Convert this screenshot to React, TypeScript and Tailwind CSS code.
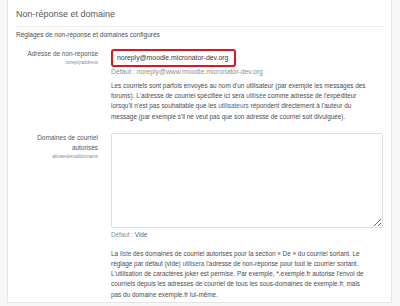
import React from 'react'

const font = { fontFamily: '"Liberation Sans", Arial, sans-serif' }

function Link({ children }: { children: React.ReactNode }) {
  return <span className="text-[#2f6ea5]">{children}</span>
}

function Row({ label, name, children }: { label: React.ReactNode; name: string; children: React.ReactNode }) {
  return (
    <div className="flex">
      <div className="w-[82px] shrink-0 text-right">
        <div className="text-[6.45px] leading-[10px] text-[#55585b]">{label}</div>
        <div className="text-[4.8px] leading-[7px] text-[#8a8f94]">{name}</div>
      </div>
      <div className="ml-[13px] flex-1">{children}</div>
    </div>
  )
}

export default function App() {
  return (
    <div className="w-[400px] h-[306px] overflow-hidden bg-[#f7f7f7] pl-[7px] pr-[8px]" style={font}>
      <div className="bg-white border-x border-b border-[#e5e5e5] px-[8px] h-[303px]">
        {/* En-tête de la section */}
        <h3 className="pt-[7px] text-[9px] leading-[14px] text-[#55585b] font-normal">Non-réponse et domaine</h3>
        <div className="mt-[5px] border-t border-[#ececec]" />
        <p className="mt-[3px] text-[6.5px] leading-[10px] text-[#4a4d50]">
          Réglages de non-réponse et domaines configurés
        </p>

        {/* Adresse de non-réponse */}
        <div className="mt-[9px]">
          <Row label="Adresse de non-réponse" name="noreplyaddress">
            <div className="w-[125px] h-[18px] border-2 border-[#e8121e] rounded-[3px] pl-[4px] flex items-center text-[6.9px] text-[#373a3c] whitespace-nowrap">
              noreply@moodle.micronator-dev.org
            </div>
            <div className="text-[6.8px] leading-[9px] text-[#8a8f94]">Défaut : noreply@www.moodle.micronator-dev.org</div>
            <p className="mt-[5px] text-[6.4px] leading-[10.2px] text-[#4a4d50] whitespace-nowrap">
              Les courriels sont parfois envoyés au nom d'un utilisateur (par exemple les messages des
              <br />
              forums). L'adresse de courriel spécifiée ici sera <Link>utilisée</Link> comme adresse de l'expéditeur
              <br />
              lorsqu'il n'est pas souhaitable que les <Link>utilisateurs</Link> répondent directement à l'auteur du
              <br />
              message (par exemple s'il ne veut pas que son adresse de courriel soit divulguée).
            </p>
          </Row>
        </div>

        {/* Domaines de courriel autorisés */}
        <div className="mt-[11px]">
          <Row
            label={
              <>
                Domaines de courriel
                <br />
                autorisés
              </>
            }
            name="allowedemaildomains"
          >
            <textarea
              className="block w-full h-[95px] border border-[#dedede] rounded-[2px] resize-y"
              defaultValue=""
            />
            <div className="mt-[2px] text-[6.3px] leading-[9px] text-[#8a8f94]">
              Défaut : <Link>Vide</Link>
            </div>
            <p className="mt-[10px] text-[6.4px] leading-[10.2px] text-[#4a4d50] whitespace-nowrap">
              La <Link>liste</Link> des domaines de courriel autorisés pour la section « De » du courriel sortant. Le
              <br />
              réglage par défaut (vide) <Link>utilisera</Link> l'adresse de non-réponse pour tout le courrier sortant.
              <br />
              L'utilisation de caractères joker est permise. Par exemple, *.exemple.fr autorise l'envoi de
              <br />
              courriels depuis les adresses de courriel de tous les sous-domaines de exemple.fr, mais
              <br />
              pas du domaine exemple.fr lui-même.
            </p>
          </Row>
        </div>
      </div>
    </div>
  )
}
